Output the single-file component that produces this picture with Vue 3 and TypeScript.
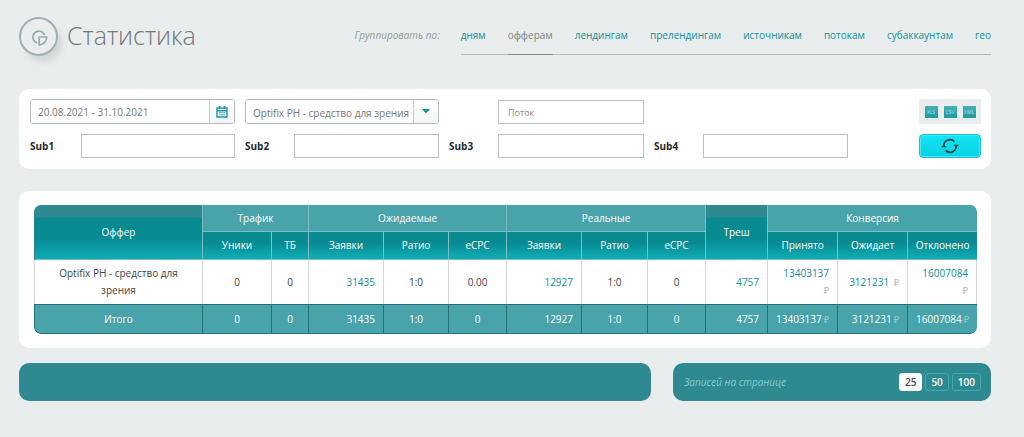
<script setup lang="ts">
import { ref } from 'vue'

interface Group {
  id: string
  label: string
}

interface Cell {
  text: string
  align?: 'right'
  link?: boolean
  money?: boolean
}

const groups: Group[] = [
  { id: 'days', label: 'дням' },
  { id: 'offers', label: 'офферам' },
  { id: 'landings', label: 'лендингам' },
  { id: 'prelandings', label: 'прелендингам' },
  { id: 'sources', label: 'источникам' },
  { id: 'flows', label: 'потокам' },
  { id: 'subaccounts', label: 'субаккаунтам' },
  { id: 'geo', label: 'гео' },
]
const activeGroup = ref('offers')

const period = ref('20.08.2021 - 31.10.2021')
const offer = ref('optifix')
const flow = ref('')
const subs = ref(['', '', '', ''])

const formats = ['XLS', 'CSV', 'XML']

const columnWidths = [168, 69, 37, 75, 65, 58, 75, 66, 58, 62, 70, 70, 70]
const columnTitles = [
  'Уники', 'ТБ', 'Заявки', 'Ратио', 'eCPC', 'Заявки', 'Ратио', 'eCPC',
  'Принято', 'Ожидает', 'Отклонено',
]

const row: Cell[] = [
  { text: 'Optifix PH - средство для зрения' },
  { text: '0' },
  { text: '0' },
  { text: '31435', align: 'right', link: true },
  { text: '1:0' },
  { text: '0.00' },
  { text: '12927', align: 'right', link: true },
  { text: '1:0' },
  { text: '0' },
  { text: '4757', align: 'right', link: true },
  { text: '13403137', align: 'right', link: true, money: true },
  { text: '3121231', align: 'right', link: true, money: true },
  { text: '16007084', align: 'right', link: true, money: true },
]

const totals: Cell[] = [
  { text: 'Итого' },
  { text: '0' },
  { text: '0' },
  { text: '31435', align: 'right' },
  { text: '1:0' },
  { text: '0' },
  { text: '12927', align: 'right' },
  { text: '1:0' },
  { text: '0' },
  { text: '4757', align: 'right' },
  { text: '13403137', align: 'right', money: true },
  { text: '3121231', align: 'right', money: true },
  { text: '16007084', align: 'right', money: true },
]

const pageSizes = [25, 50, 100]
const pageSize = ref(25)
</script>

<template>
  <div class="page">
    <header class="head">
      <div class="brand">
        <span class="badge">
          <svg viewBox="0 0 18 18" width="18" height="18" aria-hidden="true">
            <path d="M14.6 7.2A6 6 0 1 0 7 14.8" />
            <path d="M9.2 9H16.8C16.6 13 13.6 16.6 9.2 17Z" />
          </svg>
        </span>
        <h1>Статистика</h1>
      </div>
      <div class="grouping">
        <span class="hint">Группировать по:</span>
        <nav class="tabs">
          <a
            v-for="g in groups"
            :key="g.id"
            href="#"
            :class="{ active: g.id === activeGroup }"
            @click.prevent="activeGroup = g.id"
          >{{ g.label }}</a>
        </nav>
      </div>
    </header>

    <form class="panel filters" @submit.prevent>
      <div class="combo">
        <input v-model="period" type="text" aria-label="Период" />
        <button type="button" class="addon" aria-label="Календарь">
          <svg viewBox="0 0 12 12" width="12" height="12" aria-hidden="true">
            <path d="M1 2H11V11H1ZM1 4.7H11" fill="none" stroke="#1d959d" stroke-width="1.4" />
            <path d="M3.5 0V3M8.5 0V3" stroke="#1d959d" stroke-width="1.6" />
            <path d="M3 6.7H9M3 8.8H9" stroke="#1d959d" stroke-width="1" stroke-dasharray="1.6 .6" />
          </svg>
        </button>
      </div>
      <div class="combo">
        <select v-model="offer" aria-label="Оффер">
          <option value="optifix">Optifix PH - средство для зрения</option>
        </select>
        <span class="addon">
          <svg viewBox="0 0 8 5" width="8" height="5" aria-hidden="true">
            <path d="M0 0H8L4 4.6Z" fill="#1d8f97" />
          </svg>
        </span>
      </div>
      <div class="field indented">
        <input v-model="flow" type="text" placeholder="Поток" aria-label="Поток" />
      </div>
      <div class="exports">
        <button v-for="f in formats" :key="f" type="button">{{ f }}</button>
      </div>

      <div v-for="(_, i) in subs" :key="i" class="field">
        <label :for="'sub' + i">Sub{{ i + 1 }}</label>
        <input :id="'sub' + i" v-model="subs[i]" type="text" />
      </div>
      <button type="submit" class="refresh" aria-label="Обновить">
        <svg viewBox="0 0 18 16" width="18" height="16" aria-hidden="true">
          <path d="M2.8 8.6A6.2 6.2 0 0 1 13.4 3.6M15.2 7.4A6.2 6.2 0 0 1 4.6 12.4" fill="none" stroke="#123c42" stroke-width="1.6" />
          <path d="M.2 9.2H5.4L2.8 6.2ZM12.6 6.8H17.8L15.2 9.8Z" fill="#123c42" />
        </svg>
      </button>
    </form>

    <section class="panel report">
      <table>
        <colgroup>
          <col v-for="(w, i) in columnWidths" :key="i" :style="{ width: w + 'px' }" />
        </colgroup>
        <thead>
          <tr class="top">
            <th rowspan="2" class="tall">Оффер</th>
            <th colspan="2">Трафик</th>
            <th colspan="3">Ожидаемые</th>
            <th colspan="3">Реальные</th>
            <th rowspan="2" class="tall">Треш</th>
            <th colspan="3">Конверсия</th>
          </tr>
          <tr class="sub">
            <th v-for="(t, i) in columnTitles" :key="i">{{ t }}</th>
          </tr>
        </thead>
        <tbody>
          <tr>
            <td v-for="(c, i) in row" :key="i" :class="c.align">
              <a v-if="c.link" href="#" @click.prevent>{{ c.text }}</a>
              <template v-else>{{ c.text }}</template>
              {{ ' ' }}<span v-if="c.money" class="rub">₽</span>
            </td>
          </tr>
        </tbody>
        <tfoot>
          <tr>
            <td v-for="(c, i) in totals" :key="i" :class="c.align">{{ c.text }}<span v-if="c.money" class="rub">₽</span></td>
          </tr>
        </tfoot>
      </table>
    </section>

    <footer class="bottom">
      <div class="bar"></div>
      <div class="bar sizes">
        <span class="caption">Записей на странице</span>
        <button
          v-for="n in pageSizes"
          :key="n"
          type="button"
          :class="{ current: n === pageSize }"
          @click="pageSize = n"
        >{{ n }}</button>
      </div>
    </footer>
  </div>
</template>

<style>
body {
  background: #e9eded;
}
</style>

<style scoped>
.page,
.page * {
  box-sizing: border-box;
}

.page {
  padding: 17px 33px 35px 19px;
  font-family: "Open Sans", "Noto Sans", sans-serif;
  font-size: 10px;
  color: #3c4648;
}

button,
input,
select {
  font: inherit;
  color: inherit;
  margin: 0;
  padding: 0;
}

button {
  cursor: pointer;
}

a {
  color: #0f8f97;
  text-decoration: none;
}

.head {
  display: flex;
  justify-content: space-between;
  align-items: flex-start;
  height: 72px;
}

.brand {
  display: flex;
  align-items: center;
  gap: 9px;
}

.badge {
  display: flex;
  align-items: center;
  justify-content: center;
  width: 39px;
  height: 39px;
  border: 2px solid #9db0b4;
  border-radius: 50%;
  background: #e9eded;
  box-shadow: 5px 7px 6px -1px #d0d7d9;
}

.badge svg {
  fill: none;
  stroke: #95a9ad;
  stroke-width: 1.6;
}

h1 {
  margin: 0;
  font-size: 25px;
  line-height: 36px;
  padding-bottom: 3px;
  font-weight: 300;
  color: #727979;
}

.grouping {
  display: flex;
  gap: 21px;
  line-height: 37px;
}

.hint {
  font-style: italic;
  color: #929a9b;
}

.tabs {
  display: flex;
  justify-content: space-between;
  gap: 22px;
  border-bottom: 1px solid #b0babd;
}

.tabs a {
  margin-bottom: -1px;
  border-bottom: 1px solid transparent;
  font-weight: 500;
}

.tabs a.active {
  color: #7b8283;
  border-bottom-color: #858c8d;
}

.panel {
  border-radius: 10px;
  background: #fff;
}

.filters {
  display: grid;
  grid-template-columns: 205fr 194fr 195fr 194fr 123fr;
  gap: 10px;
  padding: 10px 10px 11px 11px;
}

.combo {
  display: flex;
  height: 25px;
  overflow: hidden;
  border: 1px solid #b3bcc0;
  border-radius: 3px;
  color: #70787a;
}

.combo input,
.combo select {
  flex: 1;
  min-width: 0;
  padding-left: 7px;
  border: 0;
  background: #fff;
  appearance: none;
}

.combo select {
  padding-top: 2px;
}

.addon {
  display: flex;
  align-items: center;
  justify-content: center;
  width: 25px;
  border: 0;
  border-left: 1px solid #c3cacd;
  background: linear-gradient(#fff, #f2f5f5);
}

.field {
  display: flex;
  align-items: center;
}

.field label {
  width: 49px;
  font-weight: 700;
  color: #252b2d;
}

.field label[for="sub0"] {
  width: 51px;
}

.field input {
  flex: 1;
  min-width: 0;
  height: 24px;
  padding-left: 9px;
  border: 1px solid #b9c1c4;
  background: #fff;
}

.field input::placeholder {
  color: #858c8d;
  font-size: 9px;
  opacity: 1;
}

.indented {
  padding-left: 49px;
}

.exports {
  grid-column: 4 / 6;
  justify-self: end;
  display: flex;
  align-items: center;
  justify-content: center;
  gap: 6px;
  width: 62px;
  height: 25px;
  background: #e9eded;
}

.exports button {
  width: 13px;
  height: 12px;
  border: 0;
  background: linear-gradient(#4aafb6, #1a9aa2);
  color: #a5e0e3;
  font-size: 5px;
  line-height: 12px;
}

.refresh {
  justify-self: end;
  display: flex;
  align-items: center;
  justify-content: center;
  width: 62px;
  height: 24px;
  border: 1px solid #12c3d4;
  border-radius: 4px;
  background: linear-gradient(#12e6f6, #08d0e2);
  box-shadow: inset 0 0 0 1px #4fe6f2;
}

.report {
  margin-top: 22px;
  padding: 14px 14px 14px 15px;
}

table {
  width: 100%;
  table-layout: fixed;
  border-collapse: separate;
  border-spacing: 0;
  border-radius: 7px;
  overflow: hidden;
  line-height: 17px;
  text-align: center;
}

th {
  padding: 0;
  border-left: 1px solid #79c0c5;
  border-bottom: 1px solid #79c0c5;
  font-weight: 500;
  color: #fff;
}

.top th {
  height: 27px;
  background: #48a3ab;
}

.sub th,
.top .tall {
  height: 28px;
  background: linear-gradient(#088a91 40%, #0ea8b1 90%);
}

.top .tall {
  background: linear-gradient(#2e8990 12px, #088a91 13px, #088a91 60%, #0ea8b1 95%);
}

th:first-child.tall {
  border-left-color: #2b8087;
}

td {
  padding: 5px 8px;
  border-left: 1px solid #d5dadb;
}

td:first-child {
  padding: 5px 20px;
}

tbody td:last-child {
  border-right: 1px solid #d5dadb;
}

td.right {
  padding-left: 0;
  text-align: right;
}

tbody td.right {
  padding-left: 8px;
}

tfoot td {
  height: 30px;
  border-left-color: #247077;
  border-top: 1px solid #247077;
  border-bottom: 1px solid #247077;
  background: #48a3ab;
  color: #fff;
  font-weight: 500;
  white-space: nowrap;
}

tfoot td:first-child {
  border-bottom-left-radius: 7px;
}

tfoot td:last-child {
  border-bottom-right-radius: 7px;
}

.rub {
  margin-left: 2px;
  color: #abb2b4;
  font-size: 9px;
}

tfoot .rub {
  color: #8fcbd0;
}

.bottom {
  display: grid;
  grid-template-columns: 632fr 318fr;
  gap: 22px;
  margin-top: 15px;
}

.bar {
  height: 38px;
  border-radius: 10px;
  background: #2e8990;
}

.sizes {
  display: flex;
  align-items: center;
  gap: 3px;
  padding: 0 10px 0 11px;
}

.caption {
  flex: 1;
  font-style: italic;
  color: #85cdd1;
}

.sizes button {
  height: 18px;
  padding: 0 5px;
  border: 1px solid #43a9b0;
  border-radius: 3px;
  background: none;
  color: #fff;
  font-weight: 600;
  line-height: 16px;
}

.sizes button.current {
  border-color: #fff;
  background: #fff;
  color: #3c4648;
}
</style>
